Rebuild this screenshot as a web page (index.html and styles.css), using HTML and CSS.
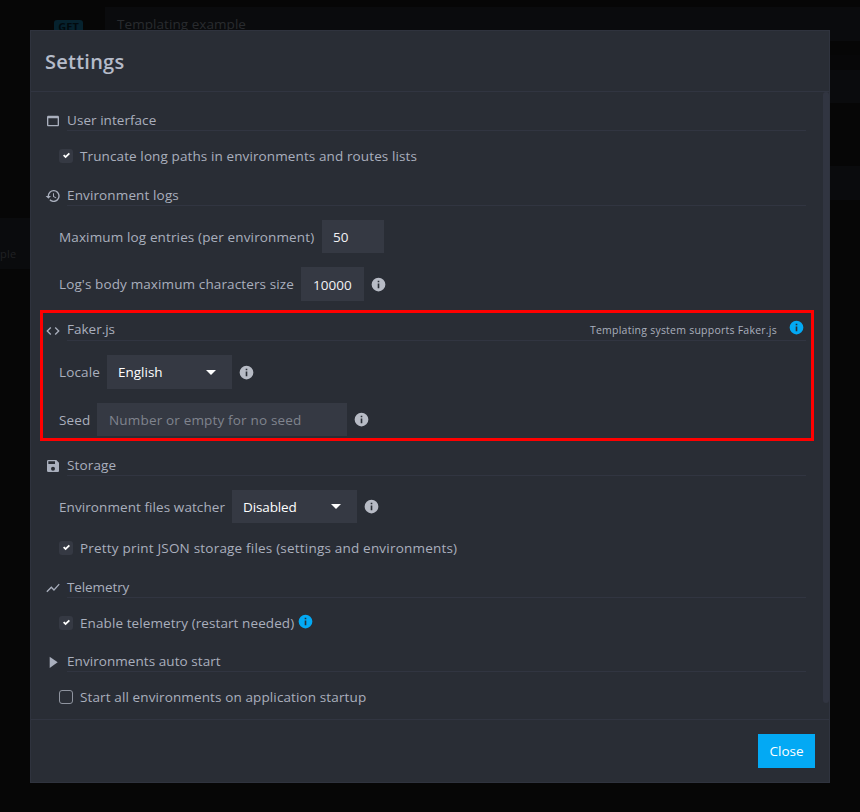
FILE: index.html
```html
<!DOCTYPE html>
<html lang="en">
<head>
<meta charset="utf-8">
<title>Settings</title>
<link rel="stylesheet" href="styles.css">
</head>
<body>
<svg class="defs" width="0" height="0" aria-hidden="true">
<symbol id="info" viewBox="0 0 24 24"><path fill="currentColor" d="M12 1a11 11 0 1 0 0 22 11 11 0 0 0 0-22zm1.3 17h-2.6v-7.5h2.6zm0-9.5h-2.6V5.8h2.6z"/></symbol>
<symbol id="check" viewBox="0 0 8 8"><path fill="currentColor" d="M6.564.75l-3.59 3.612-1.538-1.55L0 4.26 2.974 7.25 8 2.193z"/></symbol>
</svg>
<div class="app">
  <aside class="sidebar"><div class="route">ple</div></aside>
  <main class="content">
    <div class="method"><span class="tag">GET</span></div>
    <div class="panel"><div class="name">Templating example</div><div class="strip one"></div><div class="strip two"></div><div class="strip three"></div></div>
  </main>
</div>
<div class="modal">
  <header class="modal-header"><h1>Settings</h1></header>
  <div class="modal-body">
    <section>
      <div class="head"><svg viewBox="0 0 24 24"><path fill="currentColor" d="M19 4H5c-1.110 0-2 .9-2 2v12c0 1.100.89 2 2 2h14c1.100 0 2-.9 2-2V6c0-1.100-.89-2-2-2zm0 14H5V8h14z"/></svg><h2 class="t-ui">User interface</h2></div>
      <label class="check"><span class="box on"><svg><use href="#check"/></svg></span><span class="t-trunc">Truncate long paths in environments and routes lists</span></label>
    </section>
    <section>
      <div class="head"><svg viewBox="0 0 24 24"><path fill="currentColor" d="M13 3a9 9 0 0 0-9 9H1l3.890 3.890.07.14L9 12H6a7 7 0 1 1 7 7c-1.930 0-3.680-.79-4.940-2.060l-1.420 1.420A9 9 0 1 0 13 3zm-1 5v5l4.280 2.540.72-1.210-3.500-2.080V8z"/></svg><h2 class="t-logs">Environment logs</h2></div>
      <div class="row short"><span class="t-max">Maximum log entries (per environment)</span><div class="field w62">50</div></div>
      <div class="row"><span class="t-body">Log's body maximum characters size</span><div class="field w63">10000</div><svg class="info"><use href="#info"/></svg></div>
    </section>
    <section class="highlighted">
      <div class="head"><svg viewBox="0 0 24 24"><path fill="currentColor" d="M9.400 16.600L4.800 12l4.600-4.600L8 6l-6 6 6 6zm5.200 0l4.600-4.600-4.600-4.600L16 6l6 6-6 6z"/></svg><h2 class="t-faker"><span class="faker-name">Faker.js</span><span class="hint">Templating system supports Faker.js<svg class="info blue"><use href="#info"/></svg></span></h2></div>
      <div class="row"><span class="t-locale">Locale</span><div class="field select"><span class="t-english">English</span><i></i></div><svg class="info"><use href="#info"/></svg></div>
      <div class="row short"><span class="t-seed">Seed</span><div class="field seed">Number or empty for no seed</div><svg class="info"><use href="#info"/></svg></div>
    </section>
    <section>
      <div class="head"><svg viewBox="0 0 24 24"><path fill="currentColor" d="M17 3H5a2 2 0 0 0-2 2v14a2 2 0 0 0 2 2h14c1.100 0 2-.9 2-2V7zm-5 16a3 3 0 1 1 0-6 3 3 0 0 1 0 6zm3-10H5V5h10z"/></svg><h2 class="t-storage">Storage</h2></div>
      <div class="row short"><span class="t-watch">Environment files watcher</span><div class="field select"><span class="t-disabled">Disabled</span><i></i></div><svg class="info"><use href="#info"/></svg></div>
      <label class="check"><span class="box on"><svg><use href="#check"/></svg></span><span class="t-pretty">Pretty print JSON storage files (settings and environments)</span></label>
    </section>
    <section class="telemetry">
      <div class="head"><svg viewBox="0 0 24 24"><path fill="currentColor" d="M3.500 18.490l6-6.010 4 4L22 6.920l-1.410-1.410-7.090 7.970-4-4L2 16.990z"/></svg><h2 class="t-tele">Telemetry</h2></div>
      <label class="check"><span class="box on"><svg><use href="#check"/></svg></span><span class="t-enable">Enable telemetry (restart needed)</span><svg class="info blue"><use href="#info"/></svg></label>
    </section>
    <section>
      <div class="head"><svg viewBox="0 0 24 24"><path fill="currentColor" d="M7 4v17l12-8.500z"/></svg><h2 class="t-auto">Environments auto start</h2></div>
      <label class="check"><span class="box"></span><span class="t-start">Start all environments on application startup</span></label>
    </section>
    <div class="scrollbar"></div>
  </div>
  <footer class="modal-footer"><button type="button">Close</button></footer>
</div>
</body>
</html>
```

FILE: styles.css
```css
*, *::after { box-sizing: border-box; }
body { margin: 0; width: 860px; height: 812px; overflow: hidden; background: #060606; color: #a9afbd; font: 13.5px/21px "Open Sans", "Noto Sans", sans-serif; }
.defs { position: absolute; }
h1, h2 { margin: 0; font-weight: 400; font-size: inherit; }
svg { display: block; flex: none; }

.app { display: flex; width: 860px; height: 812px; }
.sidebar { width: 30px; padding-top: 218px; }
.route { height: 51px; padding-top: 25px; background: #0a0b0d; color: #202124; font-size: 11px; letter-spacing: .3px; }
.content { flex: 1; display: flex; padding-top: 7px; }
.method { width: 75px; padding: 13px 0 0 24px; }
.tag { display: block; width: 29px; height: 17px; border-radius: 3px; background: #06222e; color: #020a0e; font-size: 11px; line-height: 14px; font-weight: 700; text-align: center; }
.panel { flex: 1; }
.name { height: 34px; padding: 7px 12px; background: #0a0b0d; color: #292b2f; letter-spacing: .06px; }
.strip { height: 33px; background: #0a0b0d; }
.strip.one { height: 15px; margin-top: 14px; background: #070708; }
.strip.three { height: 34px; margin-top: 63px; }

.modal { position: absolute; left: 30px; top: 30px; width: 800px; height: 753px; display: flex; flex-direction: column; background: #292d35; border: 1px solid #2f333e; }
.modal-header { flex: none; height: 61px; padding: 15px 14px; border-bottom: 1px solid #313541; }
h1 { font-size: 20px; line-height: 31px; font-weight: 600; color: #b5bbc9; letter-spacing: .25px; }
.modal-body { position: relative; flex: 1; min-height: 0; padding: 18px 23px 0 15px; }
.scrollbar { position: absolute; top: 0; right: 0; width: 6px; height: 611px; border-radius: 3px; background: #313541; }
section { display: flex; flex-direction: column; gap: 14px; margin-bottom: 19px; }
.telemetry { margin-bottom: 18px; }
.head { display: flex; gap: 6px; height: 21px; }
.head > svg { width: 16px; height: 16px; margin: 3px 0 0 -1px; }
.head h2 { flex: 1; height: 21px; border-bottom: 1px solid #313541; line-height: 20px; }
.row { display: flex; align-items: center; height: 34px; margin-left: 13px; }
.row.short { height: 33px; }
.field { align-self: stretch; display: flex; align-items: center; margin-left: 7px; padding: 1px 11px 0 12px; background: #353943; color: #f1f2f4; white-space: nowrap; }
.w62 { width: 62px; padding-left: 11px; }
.w63 { width: 63px; padding-top: 2px; }
.select { width: 125px; justify-content: space-between; padding: 0 16px 0 11px; color: #fff; }
.select i { border: 5px solid transparent; border-top-color: #fff; border-bottom: 0; }
.seed { width: 250px; color: #80848e; letter-spacing: .17px; }
.info { width: 15px; height: 15px; margin-left: 7.500px; color: #b7bbc5; }
.row .info { margin-left: 7px; }
.blue { color: #03a9f4; }
.check { display: flex; align-items: center; height: 21px; margin-left: 13px; }
.check .info { margin-left: 3px; margin-top: -2px; }
.box { width: 14px; height: 14px; margin-right: 7px; border: 1px solid #8f949f; border-radius: 3px; background: #2b2f37; }
.box.on { border: 0; padding: 3px 3px 4px 4px; background: #353943; color: #fff; }
.box svg { width: 7px; height: 7px; }

.highlighted { position: relative; }
.highlighted::after { content: ""; position: absolute; left: -6px; top: -10px; width: 774px; height: 131px; border: 3px solid #f00; }
.t-faker { display: flex; justify-content: space-between; }
.faker-name { line-height: 18px; }
.hint { display: flex; font-size: 10.5px; line-height: 21px; letter-spacing: .24px; margin-right: 2px; }
.hint .info { margin: 0 0 0 12px; }

.row > span, .check > span, h2 { white-space: nowrap; }
.row > span:first-child { flex: none; margin-top: 1px; }
.check > span:last-of-type { margin-top: 2px; }
.t-ui { letter-spacing: .05px; }
.t-trunc { letter-spacing: .11px; }
.t-logs { letter-spacing: .13px; }
.t-max { width: 256px; letter-spacing: .135px; }
.row > .t-body { width: 235px; letter-spacing: .12px; margin-top: 2px; }
.t-locale { width: 41px; letter-spacing: .15px; }
.t-seed { width: 31px; letter-spacing: .15px; }
.t-storage { letter-spacing: .15px; }
.t-watch { width: 166px; letter-spacing: .08px; }
.t-disabled { letter-spacing: -.12px; margin-top: 2px; }
.t-pretty { letter-spacing: .2px; }
.t-tele { letter-spacing: -.1px; }
.t-enable { width: 215px; letter-spacing: .09px; }
.t-auto { letter-spacing: .06px; }
.t-start { letter-spacing: .12px; }

.modal-footer { flex: none; height: 63px; display: flex; justify-content: flex-end; padding: 14px; border-top: 1px solid #313541; }
button { width: 57px; height: 34px; padding: 0; border: 0; background: #03a9f4; color: #fff; font: inherit; }
```
